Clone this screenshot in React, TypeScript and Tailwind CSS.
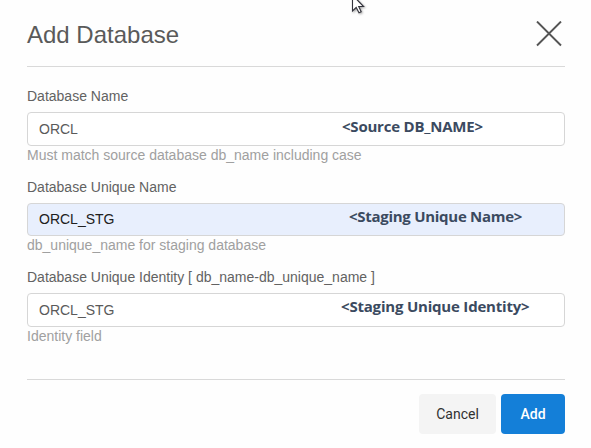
type FieldProps = {
  label: string;
  value: string;
  hint: string;
  note: string;
  noteClass: string;
  boxClass: string;
};

function Field({ label, value, hint, note, noteClass, boxClass }: FieldProps) {
  return (
    <div className="text-[14px] leading-[18px]">
      <div className="whitespace-pre text-[#626262]">{label}</div>
      <div className={`relative mt-[7px] flex items-center rounded-[4px] border border-[#d6d6d6] pl-[11px] ${boxClass}`}>
        <span>{value}</span>
        <span
          className={`absolute whitespace-nowrap font-['Open_Sans',sans-serif] text-[15px] leading-[20px] font-bold text-[#3b4a60] ${noteClass}`}
        >
          {note}
        </span>
      </div>
      <div className="text-[#a0a0a0]">{hint}</div>
    </div>
  );
}

export default function App() {
  return (
    <main className="relative h-[448px] w-[591px] overflow-hidden bg-[#fefefe] pr-[26px] pl-[27px] font-['Liberation_Sans',Arial,sans-serif]">
      <svg className="absolute top-[-6px] left-[351px] drop-shadow-[1px_1px_1px_rgba(0,0,0,0.35)]" width="16" height="22" viewBox="0 0 16 22">
        <path d="M1.5 1V17L5.2 13.5L8 18.7L10.2 17.7L7.7 12.5H12.6Z" fill="white" stroke="#34343c" strokeWidth="1.1" />
      </svg>
      <header className="flex h-[67px] items-center justify-between border-b border-[#d9d9d9] pt-[2px]">
        <h1 className="pt-[2px] text-[24px] leading-[28px] text-[#5a5a5a]">Add Database</h1>
        <svg className="mr-[3px]" width="26" height="26" viewBox="0 0 26 26" aria-label="Close">
          <path d="M1 0.5L25 24.5M25 0.5L1 24.5" stroke="#555" strokeWidth="1.9" />
        </svg>
      </header>
      <section className="flex h-[312px] flex-col gap-[14px] pt-[20px]">
        <Field
          label="Database Name"
          value="ORCL"
          hint="Must match source database db_name including case"
          note="<Source DB_NAME>"
          noteClass="top-[3px] left-[314px] tracking-[-0.22px]"
          boxClass="h-[34px] bg-white text-[#5a5a5a]"
        />
        <Field
          label="Database Unique Name"
          value="ORCL_STG"
          hint="db_unique_name for staging database"
          note="<Staging Unique Name>"
          noteClass="top-[2px] left-[321px] tracking-[-0.28px]"
          boxClass="h-[33px] bg-[#e8effd] pb-px text-[#202020]"
        />
        <Field
          label="Database Unique Identity [ db_name-db_unique_name ]"
          value="ORCL_STG"
          hint="Identity field"
          note="<Staging Unique Identity>"
          noteClass="top-[2px] left-[313px] tracking-[-0.2px]"
          boxClass="h-[34px] bg-white text-[#5a5a5a]"
        />
      </section>
      <footer className="flex justify-end gap-[5px] border-t border-[#d9d9d9] pt-[14px] font-['Roboto',sans-serif] text-[14px]">
        <button className="h-[40px] w-[77px] rounded-[4px] bg-[#f4f4f4] text-[#303030]">Cancel</button>
        <button className="h-[40px] w-[64px] rounded-[4px] bg-[#147fd8] font-medium text-white">Add</button>
      </footer>
    </main>
  );
}
